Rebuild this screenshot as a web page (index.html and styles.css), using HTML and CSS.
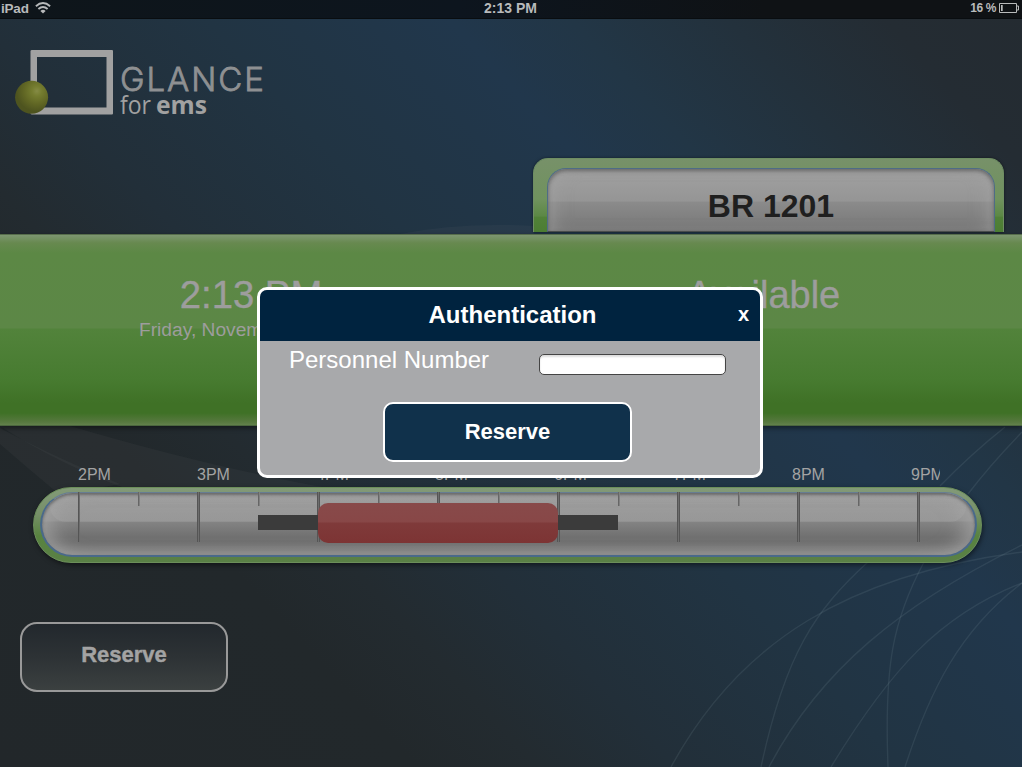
FILE: index.html
```html
<!DOCTYPE html>
<html lang="en">
<head>
<meta charset="utf-8">
<title>Glance for EMS</title>
<link rel="stylesheet" href="styles.css">
</head>
<body>
<div class="screen">
  <svg class="backdrop" viewBox="0 0 1022 767" aria-hidden="true">
    <path class="haze" d="M0 428Q50 455 120 484L60 495Q30 470 0 444Z"/>
    <path class="haze" d="M0 426Q60 465 130 490L340 490Q220 470 70 426Z"/>
    <path class="haze" d="M400 234Q460 222 534 226V234Z"/>
    <g class="arcs">
      <path d="M671 767C740 640 850 575 1022 552"/>
      <path d="M761 767C785 655 815 610 868 562"/>
      <path d="M769 767C820 670 900 605 1022 545"/>
      <path d="M831 767C890 670 940 615 1022 583"/>
      <path d="M888 767C884 665 893 620 924 562"/>
      <path d="M905 767C930 690 960 630 1022 583"/>
      <path d="M940 486Q970 455 1005 427"/>
      <path d="M968 494Q990 465 1022 432"/>
    </g>
  </svg>

  <div class="status">
    <div class="status-left">iPad
      <svg width="16" height="12" viewBox="0 0 16 12"><g fill="none" stroke="#b8babb" stroke-width="1.9"><path d="M.9 4.2Q8-2 15.1 4.2"/><path d="M3.4 7Q8 3 12.6 7"/></g><path d="M5.4 8.9Q8 6.7 10.6 8.9L8 11.5Z" fill="#b8babb"/></svg>
    </div>
    <div class="status-time">2:13 PM</div>
    <div class="status-right">16 %
      <svg width="21" height="10" viewBox="0 0 21 10"><path d="M.5.5H17.5V9.5H.5Z" fill="none" stroke="#b8babb"/><path d="M2 2H3.7V8H2Z" fill="#b8babb"/><path d="M17.5 3H19.5V7H17.5" fill="none" stroke="#b8babb"/></svg>
    </div>
  </div>

  <header class="header">
    <svg class="logo" width="256" height="72" viewBox="0 0 256 72">
      <defs><radialGradient id="ball" cx=".66" cy=".31" r=".62"><stop offset="0" stop-color="#858b45"/><stop offset=".25" stop-color="#747c2f"/><stop offset=".65" stop-color="#606624"/><stop offset="1" stop-color="#4e541f"/></radialGradient></defs>
      <path fill="#a1a1a1" fill-rule="evenodd" d="M17 3H97Q98 3 98 4V66.500Q98 67.500 97 67.500H17Q15.500 67.500 15.500 66.500V4Q15.500 3 17 3ZM22 10V60.500H91.500V10Z"/>
      <circle cx="16.6" cy="50.3" r="16.5" fill="url(#ball)"/>
      <text class="logo-name" x="105" y="43.500" textLength="144">GLANCE</text>
      <text class="logo-for" x="105" y="67" textLength="31" lengthAdjust="spacingAndGlyphs">for</text>
      <text class="logo-ems" x="141" y="67" textLength="51" lengthAdjust="spacingAndGlyphs">ems</text>
    </svg>
    <div class="room"><div class="room-face">BR 1201</div></div>
  </header>

  <section class="band">
    <div class="now">
      <div class="clock">2:13 PM</div>
      <div class="date">Friday, November</div>
    </div>
    <div class="state">Available</div>
  </section>

  <section class="timeline">
    <div class="hours"><span>2PM</span><span>3PM</span><span>4PM</span><span>5PM</span><span>6PM</span><span>7PM</span><span>8PM</span><span>9PM</span></div>
    <div class="track">
      <div class="tube">
        <div class="gloss"></div>
        <div class="ticks">
          <i></i><i></i><i></i><i></i><i></i><i></i><i></i><i></i>
        </div>
        <div class="booking"><b class="buffer"></b><b class="busy"></b><b class="buffer"></b></div>
      </div>
    </div>
  </section>

  <button class="reserve">Reserve</button>

  <div class="dialog">
    <div class="dialog-head"><span class="dialog-title">Authentication</span><span class="close">x</span></div>
    <div class="dialog-body">
      <label class="field"><span>Personnel Number</span><input type="text"></label>
      <button class="confirm">Reserve</button>
    </div>
  </div>
</div>
</body>
</html>
```
FILE: styles.css
```css
* { box-sizing: border-box; }
body { margin: 0; font-family: "Liberation Sans", Arial, sans-serif; }
button, input { font: inherit; margin: 0; padding: 0; }

.screen {
  position: relative;
  display: flex;
  flex-direction: column;
  width: 1022px;
  height: 767px;
  overflow: hidden;
  background: linear-gradient(47deg, #22272a 0%, #22282b 24%, #232b30 31%, #222f39 39%, #213443 52%, #21374c 66%, #223646 73%, #23313c 82%, #242c33 91%, #242b31 100%);
}
.backdrop { position: absolute; inset: 0; width: 1022px; height: 767px; }
.haze { fill: rgba(150, 160, 160, .06); }
.arcs { fill: none; stroke: rgba(150, 170, 180, .13); stroke-width: 1.4; }

.status {
  position: relative;
  display: grid;
  grid-template-columns: 1fr auto 1fr;
  align-items: center;
  height: 19px;
  padding: 0 2px 2px 1px;
  background: linear-gradient(90deg, #0e151a, #0d151e 45%, #0f1215 75%);
  border-bottom: 1px solid #090d10;
  color: #b8babb;
  font-weight: bold;
}
.status-left, .status-right { display: flex; align-items: center; }
.status-left { gap: 6px; font-size: 13.5px; letter-spacing: -.2px; }
.status-time { font-size: 14px; }
.status-right { justify-content: flex-end; gap: 3px; font-size: 12px; letter-spacing: -.4px; }

.header {
  position: relative;
  display: flex;
  justify-content: space-between;
  height: 215px;
  padding: 28px 18px 2px 15px;
}
.logo { overflow: visible; }
.logo-name { font: 300 33px Inter, "Open Sans", sans-serif; fill: #8e9092; stroke: #8e9092; stroke-width: .8; }
.logo-for { font: 400 25px "Open Sans", sans-serif; fill: #a1a1a1; }
.logo-ems { font: 700 25px "Open Sans", sans-serif; fill: #a1a1a1; }

.room {
  align-self: flex-end;
  width: 471px;
  height: 74px;
  padding: 9px 8px 0 13px;
  border-radius: 15px 15px 0 0;
  border: 1px solid #6f8e63;
  border-bottom: 0;
  background: linear-gradient(#779169 0, #70925e 55%, #5c8845 78%, #518138 80%, #4c7d33 100%);
  box-shadow: 0 0 3px rgba(0, 0, 0, .5);
}
.room-face {
  height: 64px;
  border: 1px solid #4e6c86;
  border-bottom: 1px solid #4b4e4e;
  border-radius: 19px 19px 0 0;
  background: linear-gradient(#a1a1a1 0, #959595 52%, #8b8b8b 53%, #777 100%);
  box-shadow: inset 0 2px 4px rgba(60, 60, 60, .6), inset 14px 0 18px -9px rgba(165, 165, 165, .6), inset -14px 0 18px -9px rgba(165, 165, 165, .6);
  color: #1f1f1f;
  font-size: 32px;
  font-weight: bold;
  line-height: 75px;
  text-align: center;
}

.band {
  position: relative;
  display: grid;
  grid-template-columns: 511px 511px;
  height: 192px;
  padding-top: 37px;
  background: linear-gradient(#7d9671 0, #67894f 8px, #5c8845 18px, #5c8746 93px, #52833b 94px, #477b30 145px, #3f7126 168px, #3f7126 178px, #57783f 187px, #62814c 100%);
  border-top: 1px solid #566d4b;
  border-bottom: 1px solid #4b663e;
  box-shadow: 0 2px 5px rgba(0, 0, 0, .45);
  color: #9d9d9d;
}
.now { padding-left: 139px; }
.clock { width: 224px; font-size: 38.3px; line-height: 46px; text-align: center; -webkit-text-stroke: .4px #9d9d9d; }
.date { padding-top: 1px; font-size: 19.2px; line-height: 22px; }
.state { padding-right: 6px; font-size: 38px; line-height: 46px; text-align: center; -webkit-text-stroke: .4px #9d9d9d; }

.timeline { position: relative; padding: 38px 39px 0 33px; }
.hours {
  display: flex;
  width: 862px;
  height: 23px;
  margin-left: 45px;
  overflow: hidden;
  color: #a3a3a3;
  font-size: 16px;
  line-height: 21px;
}
.hours span { flex: 0 0 119px; }
.track {
  width: 949px;
  height: 76px;
  padding: 4px 4px 5px 6px;
  border: 1px solid #6c8f5a;
  border-radius: 38px;
  background: linear-gradient(#839a78, #768f68 35%, #58833f 65%, #5a8046);
  box-shadow: 1px 2px 5px rgba(0, 0, 0, .5);
}
.tube {
  position: relative;
  height: 65px;
  border: 2px solid #49698a;
  border-top: 1px solid #667d92;
  border-radius: 33px;
  background: linear-gradient(#a0a0a0 0, #909090 28px, #838383 29px, #707070 44px, #727272 50px, #8b8b8b 100%);
  box-shadow: inset 0 2px 3px rgba(50, 50, 50, .5), inset 18px 0 20px -9px rgba(165, 165, 165, .75), inset -18px 0 20px -9px rgba(165, 165, 165, .75);
}
.gloss { position: absolute; left: 8px; right: 9px; top: 0; height: 29px; border-radius: 4px 4px 16px 16px; background: linear-gradient(rgba(255, 255, 255, 0), rgba(255, 255, 255, .07)); }
.ticks { position: absolute; left: 35px; top: -1px; display: flex; }
.ticks i { width: 120px; height: 50px; background: linear-gradient(90deg, #555 1px, #6d6d6d 1px 2px, #555 2px) 0 0 / 3px 50px no-repeat, linear-gradient(90deg, #666 1px, #808080 1px) 61px 0 / 2px 14px no-repeat; }
.ticks i:first-child { background-position: 1px 0, 61px 0; background-size: 2px 50px, 2px 14px; }
.ticks i:last-child { background-size: 3px 50px, 0 0; }
.booking { position: absolute; left: 216px; top: 10px; display: flex; align-items: flex-start; }
.buffer { width: 60px; height: 15px; margin-top: 12px; background: #3b3b3b; }
.busy { width: 240px; height: 40px; border-radius: 10px; background: linear-gradient(#884a4a 0, #884747 19px, #7f3a3a 20px, #7d3434 100%); }

.reserve {
  position: relative;
  width: 208px;
  height: 70px;
  margin: 59px 0 0 20px;
  padding-bottom: 4px;
  border: 2px solid #999;
  border-radius: 17px;
  background: linear-gradient(#22282d, #2d3235 50%, #3b4040);
  color: #a3a3a3;
  font-size: 22px;
  font-weight: bold;
  -webkit-text-stroke: .4px #a3a3a3;
}

/* Modal floats over the dimmed screen */
.dialog {
  position: absolute;
  left: 257px;
  top: 287px;
  width: 506px;
  height: 191px;
  border: 3px solid #fff;
  border-radius: 10px;
  background: #a8a9ab;
  color: #fff;
  overflow: hidden;
}
.dialog-head {
  display: grid;
  grid-template-columns: 32px 1fr 32px;
  align-items: center;
  height: 51px;
  padding-bottom: 1px;
  background: #00233f;
  font-weight: bold;
}
.dialog-title { grid-column: 2; padding-left: 5px; font-size: 24px; text-align: center; }
.close { font-size: 20px; text-align: center; line-height: 20px; padding: 0 1px 2px 0; }
.dialog-body { display: flex; flex-direction: column; align-items: flex-start; }
.field { display: flex; height: 61px; padding: 5px 0 0 29px; font-size: 24px; line-height: 28px; }
.field span { width: 250px; }
.field input { width: 187px; height: 21px; margin-top: 8px; border: 1px solid #444; border-radius: 5px; background: #fff; box-shadow: inset 0 2px 2px #ddd; }
.confirm { width: 249px; height: 60px; margin-left: 123px; border: 2px solid #fff; border-radius: 10px; background: #10314b; color: #fff; font-size: 22px; font-weight: bold; }
```
